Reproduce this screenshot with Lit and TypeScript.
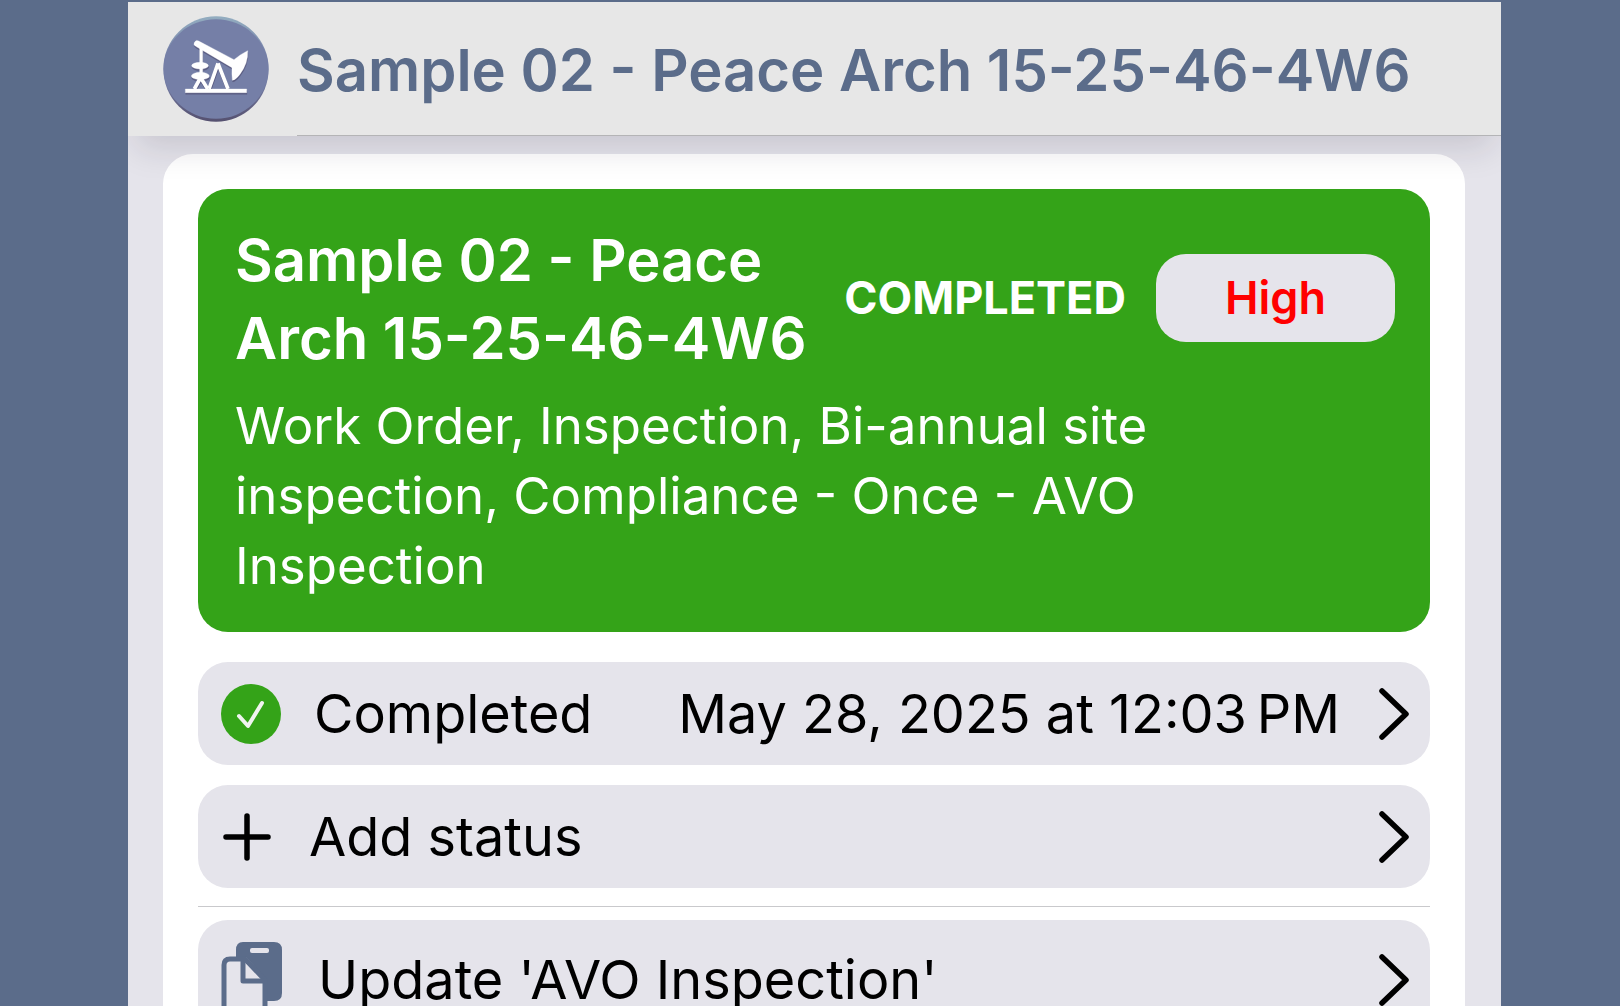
import { LitElement, html, css, nothing } from "lit";
import { customElement, property } from "lit/decorators.js";

const pumpjackIcon = html`
  <svg class="logo" viewBox="0 0 318 318" role="img" aria-label="Well site">
    <defs>
      <linearGradient id="rim" x1="0" y1="0" x2="0" y2="1">
        <stop offset="0" stop-color="#93adc0" />
        <stop offset="0.4" stop-color="#757fa7" />
        <stop offset="0.6" stop-color="#757fa7" />
        <stop offset="1" stop-color="#55506f" />
      </linearGradient>
      <g id="pump">
        <path d="M67 219h184v11H67z" />
        <path d="M107 75L213 131Q232 115 254 104Q256 142 230 176Q218 192 208 193Q206 176 207 155L98 91A9 9 0 0 1 107 75Z" />
        <path d="M110 92h9v96h-9z" />
        <ellipse cx="111" cy="149" rx="25" ry="10" />
        <ellipse cx="112" cy="180" rx="27" ry="11" />
        <path d="M112 186L94 219M116 190L134 219M165 142L138 219M165 142L195 219" fill="none" stroke-width="11" />
      </g>
    </defs>
    <circle cx="159" cy="159" r="158" fill="url(#rim)" />
    <ellipse cx="159" cy="159" rx="157" ry="149" fill="#757fa7" />
    <use href="#pump" transform="translate(1 5)" fill="#595a80" stroke="#595a80" />
    <use href="#pump" fill="#fff" stroke="#fff" />
  </svg>
`;

const checkIcon = html`
  <svg class="icon check" viewBox="0 0 63 60" aria-hidden="true">
    <circle cx="30" cy="30" r="30" fill="#34a318" />
    <path d="M18 32L27 42L41 19" fill="none" stroke="#f0f4f0" stroke-width="4" stroke-linecap="round" stroke-linejoin="round" />
  </svg>
`;

const plusIcon = html`
  <svg class="icon plus" viewBox="0 0 58 60" aria-hidden="true">
    <path d="M5 30H47M26 9V51" fill="none" stroke="#000" stroke-width="5.5" stroke-linecap="round" />
  </svg>
`;

const copyIcon = html`
  <svg class="icon copy" viewBox="0 0 67 76" aria-hidden="true">
    <path d="M22 0H53Q61 0 61 8V51Q61 59 53 59H46V38L25 15H15V8Q15 0 22 0Z" fill="#5b6c8a" />
    <rect x="29" y="6" width="19" height="5" rx="2" fill="#e5e4eb" />
    <path
      d="M9 17H24L44 38V67Q44 73 38 73H10Q3 73 3 67V23Q3 17 9 17Z"
      fill="#e5e4eb"
      stroke="#5b6c8a"
      stroke-width="5"
      stroke-linejoin="round"
    />
    <path d="M22 18V39H44" fill="none" stroke="#5b6c8a" stroke-width="5" stroke-linejoin="round" />
  </svg>
`;

const icons = { check: checkIcon, plus: plusIcon, copy: copyIcon };

@customElement("action-row")
export class ActionRow extends LitElement {
  @property() icon: keyof typeof icons = "check";
  @property() label = "";
  @property() detail = "";

  static styles = css`
    :host {
      display: block;
    }
    .row {
      display: flex;
      align-items: center;
      width: 100%;
      margin: 0;
      padding: 22px 20px 21px 23px;
      border: 0;
      border-radius: 30px;
      background: #e5e4eb;
      color: #000;
      font: 400 54px/60px Inter, "Liberation Sans", sans-serif;
      text-align: left;
      cursor: pointer;
    }
    .icon {
      flex: none;
      display: block;
      margin-right: 30px;
    }
    .check {
      width: 63px;
      height: 60px;
    }
    .plus {
      width: 58px;
      height: 60px;
    }
    .copy {
      width: 67px;
      height: 76px;
    }
    .label {
      flex: 1;
      white-space: nowrap;
    }
    .detail {
      white-space: nowrap;
    }
    .chevron {
      flex: none;
      display: block;
      width: 32px;
      height: 52px;
      margin-left: 38px;
    }
  `;

  render() {
    return html`
      <button class="row" type="button">
        ${icons[this.icon]}
        <span class="label">${this.label}</span>
        ${this.detail ? html`<span class="detail">${this.detail}</span>` : nothing}
        <svg class="chevron" viewBox="0 0 32 52" aria-hidden="true">
          <path d="M4 3L28 26L4 49" fill="none" stroke="#000" stroke-width="5.5" stroke-linecap="round" stroke-linejoin="round" />
        </svg>
      </button>
    `;
  }
}

@customElement("app-root")
export class AppRoot extends LitElement {
  static styles = css`
    :host {
      display: flex;
      flex-direction: column;
      box-sizing: border-box;
      height: 100vh;
      padding: 2px 119px 0 128px;
      overflow: hidden;
      background: #5b6c8a;
      font-family: Inter, "Liberation Sans", sans-serif;
    }
    .screen {
      flex: 1;
      min-height: 0;
      display: flex;
      flex-direction: column;
      overflow: hidden;
      background: #e5e4eb;
    }
    .bar {
      position: relative;
      z-index: 1;
      display: flex;
      align-items: stretch;
      gap: 28px;
      padding-left: 35px;
      background: #e7e7e7;
      box-shadow: 0 20px 32px -8px rgba(30, 24, 44, 0.14);
    }
    .logo {
      flex: none;
      align-self: center;
      width: 106px;
      height: 106px;
    }
    .title {
      flex: 1;
      margin: 0;
      padding: 29px 0 26px;
      border-bottom: 1px solid #b4b4b6;
      color: #5b6c8a;
      font-size: 58px;
      line-height: 78px;
      font-weight: 600;
      white-space: nowrap;
    }
    .scroll {
      flex: 1;
      min-height: 0;
      overflow: auto;
      scrollbar-width: none;
      padding: 18px 36px 0 35px;
    }
    .card {
      display: flex;
      flex-direction: column;
      gap: 20px;
      padding: 35px;
      border-radius: 30px;
      background: #fff;
    }
    .summary {
      margin-bottom: 10px;
      padding: 32px 35px 31px 37px;
      border-radius: 30px;
      background: #34a318;
      color: #fff;
    }
    .head {
      display: flex;
      align-items: flex-start;
      gap: 30px;
    }
    .name {
      flex: 1;
      margin: 0;
      font-size: 58px;
      line-height: 78px;
      font-weight: 600;
    }
    .state,
    .priority {
      margin-top: 33px;
      font-size: 45px;
      line-height: 88px;
    }
    .state {
      font-weight: 700;
    }
    .priority {
      padding: 0 69px;
      border-radius: 30px;
      background: #e5e4eb;
      color: #f00;
      font-weight: 600;
    }
    .text {
      margin: 14px 0 0;
      font-size: 51px;
      line-height: 70px;
    }
    .rule {
      width: 100%;
      height: 1px;
      margin: -2px 0 -7px;
      border: 0;
      background: #c9c9cc;
    }
  `;

  render() {
    return html`
      <div class="screen">
        <header class="bar">
          ${pumpjackIcon}
          <h1 class="title">Sample 02 - Peace Arch 15-25-46-4W6</h1>
        </header>
        <main class="scroll">
          <div class="card">
            <section class="summary">
              <div class="head">
                <h2 class="name">Sample 02 - Peace Arch 15-25-46-4W6</h2>
                <span class="state">COMPLETED</span>
                <span class="priority">High</span>
              </div>
              <p class="text">
                Work Order, Inspection, Bi-annual site inspection, Compliance - Once - AVO Inspection
              </p>
            </section>
            <action-row icon="check" label="Completed" detail=${"May 28, 2025 at 12:03\u202fPM"}></action-row>
            <action-row icon="plus" label="Add status"></action-row>
            <hr class="rule" />
            <action-row icon="copy" label="Update 'AVO Inspection'"></action-row>
          </div>
        </main>
      </div>
    `;
  }
}
